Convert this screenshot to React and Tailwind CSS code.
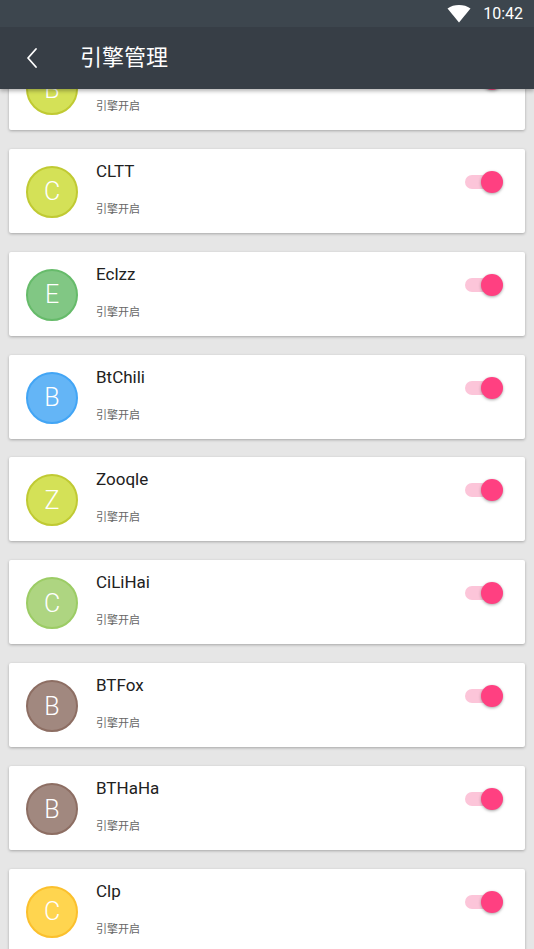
import React from "react";

const items = [
  { name: "", letter: "B", bg: "bg-[#d4e157]", border: "border-[#c0ca33]" },
  { name: "CLTT", letter: "C", bg: "bg-[#d4e157]", border: "border-[#c0ca33]" },
  { name: "Eclzz", letter: "E", bg: "bg-[#81c784]", border: "border-[#66bb6a]" },
  { name: "BtChili", letter: "B", bg: "bg-[#64b5f6]", border: "border-[#42a5f5]" },
  { name: "Zooqle", letter: "Z", bg: "bg-[#d4e157]", border: "border-[#c0ca33]" },
  { name: "CiLiHai", letter: "C", bg: "bg-[#aed581]", border: "border-[#9ccc65]" },
  { name: "BTFox", letter: "B", bg: "bg-[#a1887f]", border: "border-[#8d6e63]" },
  { name: "BTHaHa", letter: "B", bg: "bg-[#a1887f]", border: "border-[#8d6e63]" },
  { name: "Clp", letter: "C", bg: "bg-[#ffd54f]", border: "border-[#fbc02d]" },
];

const font = "font-['Roboto','Noto_Sans_CJK_SC',sans-serif]";

function Switch() {
  return (
    <div className="relative w-[38px] h-[22px] mt-[22px] mr-[22px] ml-auto shrink-0">
      <div className="absolute left-0 top-[4px] w-[32px] h-[14px] rounded-full bg-[#fcc5d9]" />
      <div className="absolute right-0 top-0 w-[22px] h-[22px] rounded-full bg-[#ff4081] shadow-[0_1px_3px_rgba(0,0,0,0.35)]" />
    </div>
  );
}

function Card({ item }) {
  return (
    <div className="h-[84px] mx-[9px] mb-[18.86px] bg-white rounded-[2px] shadow-[0_1px_3px_rgba(0,0,0,0.28)] flex items-start">
      <div
        className={`ml-[17px] mt-[17px] w-[52px] h-[52px] rounded-full border-2 ${item.bg} ${item.border} flex items-center justify-center shrink-0`}
      >
        <span className="text-white text-[25px] font-light leading-none">{item.letter}</span>
      </div>
      <div className="ml-[18px] flex flex-col">
        <div className="mt-[12px] h-[20px] text-[17px] leading-[20px] text-[#212121]">{item.name}</div>
        <div className="mt-[22px] text-[11px] leading-[14px] text-[#666666]">引擎开启</div>
      </div>
      <Switch />
    </div>
  );
}

export default function App() {
  return (
    <div className={`w-[534px] h-[949px] overflow-hidden bg-[#e6e6e6] flex flex-col ${font}`}>
      <div className="relative z-10 shadow-[0_2px_4px_rgba(0,0,0,0.3)]">
        <div className="h-[27px] bg-[#3d464e] flex items-center justify-end pr-[11px]">
          <svg width="24" height="18" viewBox="0 0 24 18" className="mr-[12px]">
            <path d="M12 17.5 L0.5 3.5 C3.8 1.1 7.7 0 12 0 C16.3 0 20.2 1.1 23.5 3.5 Z" fill="white" />
          </svg>
          <span className="text-white text-[16px] leading-none">10:42</span>
        </div>
        <div className="h-[62px] bg-[#373e46] flex items-center">
          <svg width="14" height="22" viewBox="0 0 14 22" className="ml-[25px]">
            <path d="M11 2 L3 11 L11 20" fill="none" stroke="white" strokeWidth="1.8" strokeLinecap="round" strokeLinejoin="round" />
          </svg>
          <span className="ml-[41px] text-white text-[22px] leading-none">引擎管理</span>
        </div>
      </div>
      <div className="flex-1 overflow-hidden">
        <div className="-mt-[43px]">
          {items.map((it, i) => (
            <Card key={i} item={it} />
          ))}
        </div>
      </div>
    </div>
  );
}
